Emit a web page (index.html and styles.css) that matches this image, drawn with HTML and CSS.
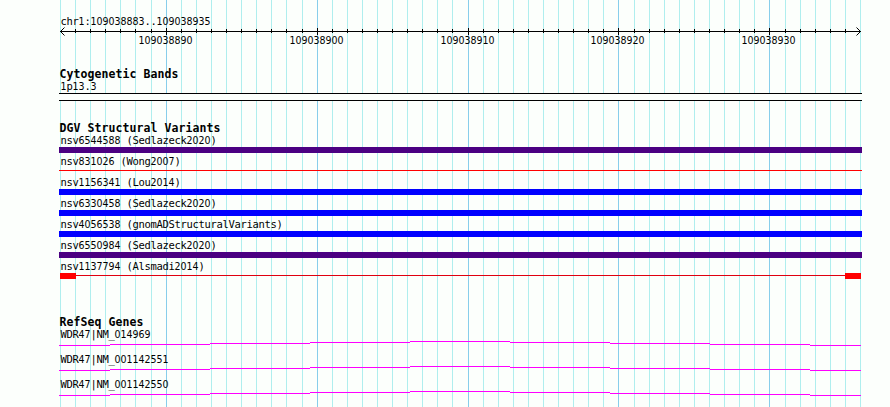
FILE: index.html
```
<!DOCTYPE html>
<html lang="en">
<head>
<meta charset="utf-8">
<title>chr1:109038883..109038935</title>
<link rel="stylesheet" href="styles.css">
</head>
<body>
<main class="browser">
  <svg class="grid" width="890" height="407" aria-hidden="true">
    <path class="minor" id="minor"/>
    <path class="major" d="M166.5 0V407M317.5 0V407M468.5 0V407M618.5 0V407M769.5 0V407"/>
  </svg>
  <header class="ruler">
    <p class="label">chr<span class="n">1</span>:<span class="n">109038883</span>..<span class="n">109038935</span></p>
    <svg class="axis" width="803" height="24">
      <path d="M1 4.5H802M5.5 0.5L1.5 4.5L5.5 8.5M797.5 0.5L801.5 4.5L797.5 8.5"/>
      <path id="ticks"/>
      <path d="M107.500 1V8M258.500 1V8M409.500 1V8M559.500 1V8M710.500 1V8"/>
      <text x="79.500" y="17">109038890</text>
      <text x="230.500" y="17">109038900</text>
      <text x="381.500" y="17">109038910</text>
      <text x="531.500" y="17">109038920</text>
      <text x="682.500" y="17">109038930</text>
    </svg>
  </header>
  <section class="track bands">
    <h2>Cytogenetic Bands</h2>
    <p class="label"><span class="n">1</span>p<span class="n">13</span>.<span class="n">3</span></p>
    <div class="band"></div>
  </section>
  <section class="track variants">
    <h2>DGV Structural Variants</h2>
    <div class="item"><p class="label">nsv<span class="n">6544588</span> (Sedlazeck<span class="n">2020</span>)</p><div class="bar indigo"></div></div>
    <div class="item"><p class="label">nsv<span class="n">831026</span> (Wong<span class="n">2007</span>)</p><div class="bar thin"></div></div>
    <div class="item"><p class="label">nsv<span class="n">1156341</span> (Lou<span class="n">2014</span>)</p><div class="bar blue"></div></div>
    <div class="item"><p class="label">nsv<span class="n">6330458</span> (Sedlazeck<span class="n">2020</span>)</p><div class="bar blue"></div></div>
    <div class="item"><p class="label">nsv<span class="n">4056538</span> (gnomADStructuralVariants)</p><div class="bar blue"></div></div>
    <div class="item"><p class="label">nsv<span class="n">6550984</span> (Sedlazeck<span class="n">2020</span>)</p><div class="bar indigo"></div></div>
    <div class="item"><p class="label">nsv<span class="n">1137794</span> (Alsmadi<span class="n">2014</span>)</p><div class="bar span"><i class="end"></i><i class="link"></i><i class="end"></i></div></div>
  </section>
  <section class="track genes">
    <h2>RefSeq Genes</h2>
    <div class="gene"><p class="label">WDR<span class="n">47</span>|NM_<span class="n">014969</span></p><svg class="intron" width="803" height="6"><path d="M0 5.500H51M51 4.500H151M151 3.500H251M251 2.500H351M351 1.500H451M451 2.500H551M551 3.500H651M651 4.500H751M751 5.500H802"/></svg></div>
    <div class="gene"><p class="label">WDR<span class="n">47</span>|NM_<span class="n">001142551</span></p><svg class="intron" width="803" height="6"><path d="M0 5.500H51M51 4.500H151M151 3.500H251M251 2.500H351M351 1.500H451M451 2.500H551M551 3.500H651M651 4.500H751M751 5.500H802"/></svg></div>
    <div class="gene"><p class="label">WDR<span class="n">47</span>|NM_<span class="n">001142550</span></p><svg class="intron" width="803" height="6"><path d="M0 5.500H51M51 4.500H151M151 3.500H251M251 2.500H351M351 1.500H451M451 2.500H551M551 3.500H651M651 4.500H751M751 5.500H802"/></svg></div>
  </section>
</main>
<script src="grid.js"></script>
</body>
</html>
```
FILE: styles.css
```
* { box-sizing: border-box; }
body { margin: 0; background: #fcfffc; color: #000; overflow: hidden; }
.browser {
  position: relative;
  width: 890px;
  height: 407px;
  padding: 15px 28px 0 59px;
  overflow: hidden;
}
.grid { position: absolute; inset: 0; z-index: -1; }
.grid path { fill: none; stroke-width: 1; }
.minor { stroke: #afeeee; }
.major { stroke: #87ceeb; }
svg { display: block; }
.label {
  margin: 0;
  padding-left: 1.5px;
  height: 12px;
  font: 10.5px/12px "DejaVu Sans Mono", monospace;
  letter-spacing: -0.32px;
  white-space: pre;
}
.n, .axis text {
  font-family: "DejaVu Sans Condensed", "DejaVu Sans", sans-serif;
  font-stretch: condensed;
  font-size: 10.5px;
  letter-spacing: -0.01px;
}
.axis path { fill: none; stroke: #000; }
.axis text { fill: #000; }
h2 {
  margin: 0;
  padding-left: 0.5px;
  height: 12px;
  font: bold 11.5px/12px "DejaVu Sans Mono", monospace;
  letter-spacing: 0.08px;
  white-space: pre;
}
.bands { margin-top: 17px; }
.band {
  height: 8px;
  margin-top: 1px;
  border: solid #000;
  border-width: 1px 0;
  background: #fcfffc;
}
.variants { margin-top: 21px; }
.item { height: 21px; }
.bar { height: 6px; margin-top: 1px; }
.indigo { background: #4b0082; }
.blue { background: #00f; }
.thin { height: 1px; margin-top: 3px; background: #f00; }
.span { display: flex; padding: 0 1px; }
.end { width: 16px; background: #f00; }
.link { flex: 1; height: 1px; margin-top: 2px; background: #e00010; }
.genes { margin-top: 35px; }
.gene { height: 25px; }
.intron path { fill: none; stroke: #f0f; }
```
FILE: grid.js
```
// Pixel columns of the single-base grid lines, relative to the page.
const columns = [
  60, 75, 90, 105, 120, 135, 151, 181, 196, 211, 226, 241, 256, 271, 286, 302,
  332, 347, 362, 377, 392, 407, 422, 437, 452, 483, 498, 513, 528, 543, 558,
  573, 588, 603, 634, 649, 664, 679, 694, 709, 724, 739, 754, 785, 800, 815,
  830, 845, 860
];
document.getElementById("minor").setAttribute("d",
  columns.map(x => `M${x + 0.5} 0V407`).join(""));
document.getElementById("ticks").setAttribute("d",
  columns.slice(1, -1).map(x => `M${x - 58.5} 2V6`).join(""));
```
